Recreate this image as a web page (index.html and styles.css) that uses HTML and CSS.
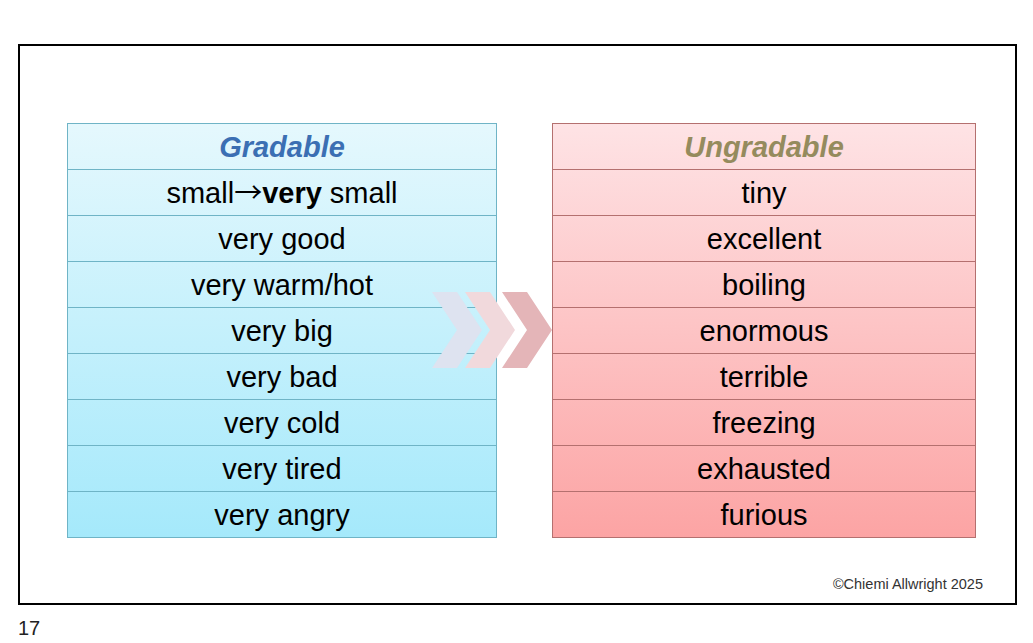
FILE: index.html
```html
<!DOCTYPE html>
<html>
<head>
<meta charset="utf-8">
<link rel="stylesheet" href="styles.css">
</head>
<body>
<div class="page">
  <div class="slide">
    <div class="tables">
      <div class="table left">
        <div class="row head"><span>Gradable</span></div>
        <div class="row"><span>small<span class="arr">→</span><b>very</b> small</span></div>
        <div class="row"><span>very good</span></div>
        <div class="row"><span>very warm/hot</span></div>
        <div class="row"><span>very big</span></div>
        <div class="row"><span>very bad</span></div>
        <div class="row"><span>very cold</span></div>
        <div class="row"><span>very tired</span></div>
        <div class="row"><span>very angry</span></div>
      </div>
      <div class="table right">
        <div class="row head"><span>Ungradable</span></div>
        <div class="row"><span>tiny</span></div>
        <div class="row"><span>excellent</span></div>
        <div class="row"><span>boiling</span></div>
        <div class="row"><span>enormous</span></div>
        <div class="row"><span>terrible</span></div>
        <div class="row"><span>freezing</span></div>
        <div class="row"><span>exhausted</span></div>
        <div class="row"><span>furious</span></div>
      </div>
    </div>
    <svg class="arrows" width="124" height="76" viewBox="0 0 124 76">
      <polygon points="0,0 25,0 50,38 25,76 0,76 25,38" fill="#dee3f0"/>
      <polygon points="33,0 58,0 83,38 58,76 33,76 58,38" fill="#f1d9dc"/>
      <polygon points="70,0 95,0 120,38 95,76 70,76 95,38" fill="#e4b5b8"/>
    </svg>
    <div class="credit">©Chiemi Allwright 2025</div>
  </div>
  <div class="pagenum">17</div>
</div>
</body>
</html>
```

FILE: styles.css
```css
html, body {
  margin: 0;
  padding: 0;
  background: #ffffff;
}
.page {
  width: 1033px;
  height: 643px;
  padding-top: 44px;
  box-sizing: border-box;
  font-family: "Liberation Sans", Arial, sans-serif;
}
.slide {
  position: relative;
  margin-left: 18px;
  width: 999px;
  height: 561px;
  box-sizing: border-box;
  border: 2px solid #000;
  padding: 77px 0 0 47px;
}
.tables {
  display: flex;
  gap: 55px;
}
.table {
  display: flex;
  flex-direction: column;
  box-sizing: border-box;
}
.table.left {
  width: 430px;
  border: 1px solid #6fb4c6;
  background: linear-gradient(to bottom, #e5f8fd, #a5e9fb);
}
.table.right {
  width: 424px;
  border: 1px solid #b4706f;
  background: linear-gradient(to bottom, #fee3e5, #fca4a4);
}
.row {
  height: 46px;
  box-sizing: border-box;
  display: flex;
  align-items: center;
  justify-content: center;
  font-size: 29px;
  color: #000;
  padding-top: 1px;
}
.arr {
  font-family: "Noto Sans CJK JP", sans-serif;
  font-size: 28px;
  line-height: 1;
}
.table.left .row + .row {
  border-top: 1px solid #6fb4c6;
}
.table.right .row + .row {
  border-top: 1px solid #b4706f;
}
.row:first-child {
  height: 45px;
}
.row.head {
  font-weight: bold;
  font-style: italic;
}
.left .head {
  color: #3b6fb3;
}
.right .head {
  color: #958b5d;
}
.arrows {
  position: absolute;
  left: 412px;
  top: 246px;
}
.credit {
  position: absolute;
  right: 32px;
  bottom: 11px;
  font-size: 14.5px;
  color: #333;
}
.pagenum {
  margin-left: 18px;
  margin-top: 12px;
  font-size: 20px;
  color: #222;
}
```
